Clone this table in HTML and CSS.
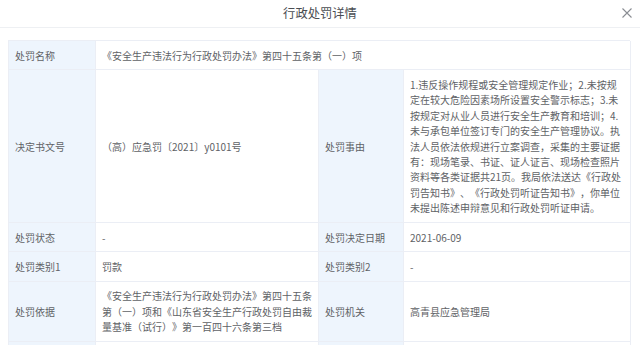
FILE: index.html
```html
<!DOCTYPE html>
<html lang="zh">
<head>
<meta charset="utf-8">
<link rel="stylesheet" href="styles.css">
</head>
<body>
<div class="dialog">
  <div class="header">
    <span class="title">行政处罚详情</span>
    <svg class="close" width="10" height="10" viewBox="0 0 10 10"><path d="M0.5 0.5L9.5 9.5M9.5 0.5L0.5 9.5" stroke="#8a8d93" stroke-width="1.1" fill="none"/></svg>
  </div>
  <div class="grid">
    <div class="lbl">处罚名称</div>
    <div class="val span3">《安全生产违法行为行政处罚办法》第四十五条第（一）项</div>

    <div class="lbl">决定书文号</div>
    <div class="val">（高）应急罚〔2021〕y0101号</div>
    <div class="lbl">处罚事由</div>
    <div class="val">1.违反操作规程或安全管理规定作业；2.未按规定在较大危险因素场所设置安全警示标志；3.未按规定对从业人员进行安全生产教育和培训；4.未与承包单位签订专门的安全生产管理协议。执法人员依法依规进行立案调查，采集的主要证据有：现场笔录、书证、证人证言、现场检查照片资料等各类证据共21页。我局依法送达《行政处罚告知书》、《行政处罚听证告知书》，你单位未提出陈述申辩意见和行政处罚听证申请。</div>

    <div class="lbl">处罚状态</div>
    <div class="val">-</div>
    <div class="lbl">处罚决定日期</div>
    <div class="val">2021-06-09</div>

    <div class="lbl">处罚类别1</div>
    <div class="val">罚款</div>
    <div class="lbl">处罚类别2</div>
    <div class="val">-</div>

    <div class="lbl">处罚依据</div>
    <div class="val">《安全生产违法行为行政处罚办法》第四十五条第（一）项和《山东省安全生产行政处罚自由裁量基准（试行）》第一百四十六条第三档</div>
    <div class="lbl">处罚机关</div>
    <div class="val">高青县应急管理局</div>

    <div class="lbl">&nbsp;</div>
    <div class="val">&nbsp;</div>
    <div class="lbl">&nbsp;</div>
    <div class="val">&nbsp;</div>
  </div>
</div>
</body>
</html>
```

FILE: styles.css
```css
html, body {
  margin: 0;
  padding: 0;
  background: #ffffff;
  overflow: hidden;
}
body {
  font-family: "Noto Sans CJK SC", "Noto Sans", sans-serif;
  font-size: 10px;
  color: #606266;
  text-spacing-trim: space-all;
}
.dialog {
  width: 640px;
  height: 345px;
  overflow: hidden;
}
.header {
  position: relative;
  height: 27px;
  border-bottom: 1px solid #eef0f3;
  display: flex;
  align-items: center;
  justify-content: center;
}
.title {
  font-size: 12.3px;
  color: #4a4d52;
  line-height: 27px;
}
.close {
  position: absolute;
  right: 8px;
  top: 8px;
}
.grid {
  margin: 12px 0 0 8px;
  width: 622px;
  display: grid;
  grid-template-columns: 87px 223px 85px 227px;
  border-top: 1px solid #ebeef5;
  border-left: 1px solid #ebeef5;
  box-sizing: border-box;
}
.lbl, .val {
  border-right: 1px solid #ebeef5;
  border-bottom: 1px solid #ebeef5;
  padding: 6.5px 6px;
  line-height: 15.4px;
  display: flex;
  align-items: center;
}
.lbl {
  background: #eef5fd;
  padding-left: 6px;
}
.val {
  background: #ffffff;
}
.span3 {
  grid-column: 2 / 5;
}
```
